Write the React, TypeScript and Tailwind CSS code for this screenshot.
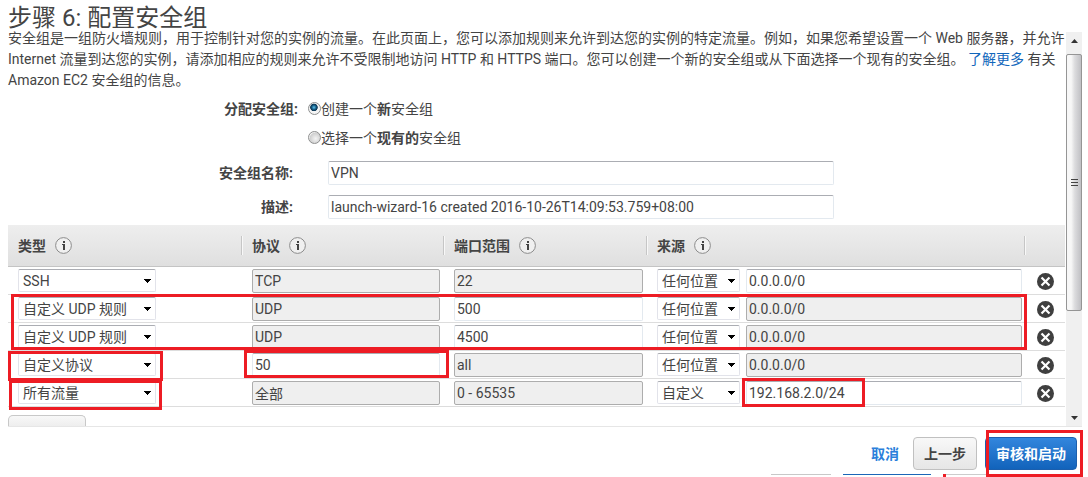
import { useState } from 'react';
import type { ReactNode } from 'react';
import clsx from 'clsx';

type Rule = {
  type: string;
  protocol: string;
  protocolEditable?: boolean;
  port: string;
  portEditable?: boolean;
  source: string;
  cidr: string;
  cidrEditable?: boolean;
};

const initialRules: Rule[] = [
  { type: 'SSH', protocol: 'TCP', port: '22', source: '任何位置', cidr: '0.0.0.0/0', cidrEditable: true },
  { type: '自定义 UDP 规则', protocol: 'UDP', port: '500', portEditable: true, source: '任何位置', cidr: '0.0.0.0/0' },
  { type: '自定义 UDP 规则', protocol: 'UDP', port: '4500', portEditable: true, source: '任何位置', cidr: '0.0.0.0/0' },
  { type: '自定义协议', protocol: '50', protocolEditable: true, port: 'all', source: '任何位置', cidr: '0.0.0.0/0' },
  { type: '所有流量', protocol: '全部', port: '0 - 65535', source: '自定义', cidr: '192.168.2.0/24', cidrEditable: true },
];

const ruleTypes = ['SSH', '自定义 UDP 规则', '自定义协议', '所有流量'];
const sources = ['任何位置', '自定义'];

function InfoIcon() {
  return (
    <svg className="size-[17px] shrink-0" viewBox="0 0 17 17" aria-hidden="true">
      <circle cx="8.5" cy="8.5" r="7.9" fill="#f0f0f0" stroke="#8c8c8c" strokeWidth="1" />
      <path d="M8 4h2v2H8zM7 7h3v6H8V8H7z" fill="#444" />
    </svg>
  );
}

function DeleteIcon() {
  return (
    <svg className="size-[17px]" viewBox="0 0 17 17" aria-hidden="true">
      <circle cx="8.5" cy="8.5" r="8.5" fill="#3f3f3f" />
      <path d="M5.3 5.3l6.4 6.4M11.7 5.3l-6.4 6.4" stroke="#fff" strokeWidth="2.2" strokeLinecap="square" />
    </svg>
  );
}

function Select({ label, value, options, className }: { label: string; value: string; options: string[]; className: string }) {
  return (
    <div className={clsx('relative shrink-0', className)}>
      <select
        aria-label={label}
        defaultValue={value}
        className="block h-[23px] w-full appearance-none rounded-[2px] border border-[#e2e3ea] border-t-[#abadb3] bg-white pl-1 leading-5"
      >
        {options.map((option) => (
          <option key={option}>{option}</option>
        ))}
      </select>
      <svg className="pointer-events-none absolute top-[10px] right-[5px] h-1 w-[7px]" viewBox="0 0 7 4" aria-hidden="true">
        <path d="M0 0h7v1H6v1H5v1H4v1H3V3H2V2H1V1H0z" fill="#000" />
      </svg>
    </div>
  );
}

function TextField({ label, value, editable }: { label: string; value: string; editable?: boolean }) {
  return (
    <input
      type="text"
      aria-label={label}
      defaultValue={value}
      disabled={!editable}
      className={clsx(
        'block h-6 w-full min-w-0 rounded-[2px] border px-0.5',
        editable ? 'border-[#e3e9ef] border-t-[#abadb3] bg-white' : 'border-[#adadad] bg-[#efefef]',
      )}
    />
  );
}

function HeaderCell({ children }: { children: ReactNode }) {
  return (
    <th scope="col" className="p-0 text-left font-bold">
      <div className="flex h-[19px] items-center gap-[9px] border-r border-[#c6c6c6] pl-[10px] shadow-[1px_0_0_#f8f8f8]">
        {children}
        <InfoIcon />
      </div>
    </th>
  );
}

function Highlight({ className }: { className: string }) {
  return <div className={clsx('pointer-events-none absolute border-3 border-[#ed1c24]', className)} />;
}

function Scrollbar() {
  return (
    <div className="mt-1 flex w-4 shrink-0 flex-col items-center bg-[#f0f0f0]" aria-hidden="true">
      <svg className="h-[22px] w-4 shrink-0" viewBox="0 0 16 22">
        <path d="M5 11l3.5-4 3.5 4z" fill="#333" />
      </svg>
      <div className="flex w-full grow-[256] basis-0 items-center justify-center rounded-[2px] border border-[#959595] bg-linear-to-r from-[#f7f7f7] from-30% via-[#dcdcde] via-55% to-[#c0c0c4]">
        <div className="flex w-[7px] flex-col gap-0.5">
          <div className="h-px bg-[#444]" />
          <div className="h-px bg-[#444]" />
          <div className="h-px bg-[#444]" />
        </div>
      </div>
      <div className="flex w-full grow-[116] basis-0 flex-col justify-end">
        <svg className="h-4 w-4" viewBox="0 0 16 16">
          <path d="M5 6h7l-3.5 4z" fill="#333" />
        </svg>
      </div>
    </div>
  );
}

export default function App() {
  const [rules, setRules] = useState(initialRules);

  return (
    <div lang="zh-CN" className="overflow-hidden bg-white font-['Roboto','Noto_Sans_CJK_SC',sans-serif] text-sm text-[#444]">
      <h1 className="h-7 pt-1.5 pl-2 text-2xl leading-6">步骤 6: 配置安全组</h1>

      <div className="mr-[6px] ml-2 flex border-b border-[#e6e6e6]">
        <div className="min-w-0 flex-1">
          <p className="leading-[21px] whitespace-nowrap">
            安全组是一组防火墙规则，用于控制针对您的实例的流量。在此页面上，您可以添加规则来允许到达您的实例的特定流量。例如，如果您希望设置一个 Web 服务器，并允许
            <br />
            Internet 流量到达您的实例，请添加相应的规则来允许不受限制地访问 HTTP 和 HTTPS 端口。您可以创建一个新的安全组或从下面选择一个现有的安全组。{' '}
            <a href="#learn-more" className="text-[#1166bb]">了解更多</a> 有关
            <br />
            Amazon EC2 安全组的信息。
          </p>

          {/* Security group */}
          <form id="security-group" className="pt-1">
            <div role="radiogroup" aria-labelledby="assign-label" className="flex gap-[10px]">
              <span id="assign-label" className="w-[290px] text-right leading-[29px] font-bold">分配安全组:</span>
              <div>
                <label className="flex h-[29px] items-center pb-0.5">
                  <input type="radio" name="group" defaultChecked className="size-[13px] appearance-none rounded-full border border-[#8e8f8f] bg-white checked:bg-[radial-gradient(circle_at_45%_40%,#5fc3ee_0,#10577f_25%,#0b3350_38%,#f4f4f4_46%)]" />
                  <span>创建一个<b>新</b>安全组</span>
                </label>
                <label className="flex h-[29px] items-center pb-0.5">
                  <input type="radio" name="group" className="size-[13px] appearance-none rounded-full border border-[#8e8f8f] bg-[radial-gradient(circle_at_60%_60%,#f4f4f4_0,#cfcfcf_60%,#f4f4f4_70%)] checked:bg-[radial-gradient(circle_at_45%_40%,#5fc3ee_0,#10577f_25%,#0b3350_38%,#f4f4f4_46%)]" />
                  <span>选择一个<b>现有的</b>安全组</span>
                </label>
              </div>
            </div>
            <div className="mt-2 flex items-center gap-[35px]">
              <label htmlFor="group-name" className="w-[285px] text-right font-bold">安全组名称:</label>
              <input id="group-name" type="text" defaultValue="VPN" className="h-6 w-[506px] rounded-[2px] border border-[#e3e9ef] border-t-[#abadb3] px-0.5" />
            </div>
            <div className="mt-[10px] flex items-center gap-[35px]">
              <label htmlFor="group-description" className="w-[285px] text-right font-bold">描述:</label>
              <input id="group-description" type="text" defaultValue="launch-wizard-16 created 2016-10-26T14:09:53.759+08:00" className="h-6 w-[506px] rounded-[2px] border border-[#e3e9ef] border-t-[#abadb3] px-0.5" />
            </div>
          </form>

          {/* Rules */}
          <div className="relative mt-1.5 mr-px">
            <table className="w-full table-fixed border-separate border-spacing-0">
              <colgroup>
                <col className="w-[234px]" />
                <col className="w-[202px]" />
                <col className="w-[203px]" />
                <col />
                <col className="w-10" />
              </colgroup>
              <thead>
                <tr className="h-[42px] bg-linear-to-b from-[#eeeeee] to-[#dfdfdf] [&>th]:border-b [&>th]:border-[#c4c4c4]">
                  <HeaderCell>类型</HeaderCell>
                  <HeaderCell>协议</HeaderCell>
                  <HeaderCell>端口范围</HeaderCell>
                  <HeaderCell>来源</HeaderCell>
                  <th aria-label="删除" />
                </tr>
              </thead>
              <tbody>
                {rules.map((rule, i) => (
                  <tr key={rule.type + rule.port} className="h-7 [&>td]:border-b [&>td]:border-[#dddddd] [&>td]:pt-0.5 [&>td]:align-top">
                    <td className="pl-[10px]">
                      <Select label="类型" value={rule.type} options={ruleTypes} className="w-[138px]" />
                    </td>
                    <td className="pr-1 pl-[10px]">
                      <TextField label="协议" value={rule.protocol} editable={rule.protocolEditable} />
                    </td>
                    <td className="pr-1 pl-[10px]">
                      <TextField label="端口范围" value={rule.port} editable={rule.portEditable} />
                    </td>
                    <td className="pr-[3px] pl-[10px]">
                      <div className="flex gap-1.5">
                        <Select label="来源" value={rule.source} options={sources} className="w-[83px]" />
                        <TextField label="来源 CIDR" value={rule.cidr} editable={rule.cidrEditable} />
                      </div>
                    </td>
                    <td>
                      <button
                        type="button"
                        aria-label="删除规则"
                        onClick={() => setRules(rules.filter((_, n) => n !== i))}
                        className="flex h-[25px] w-full items-center justify-center"
                      >
                        <DeleteIcon />
                      </button>
                    </td>
                  </tr>
                ))}
              </tbody>
            </table>

            <Highlight className="top-[69px] right-[38px] left-[3px] h-14" />
            <Highlight className="top-[126px] left-0 h-[30px] w-[155px]" />
            <Highlight className="top-[125px] left-[236px] h-7 w-[205px]" />
            <Highlight className="top-[155px] left-px h-[30px] w-[153px]" />
            <Highlight className="top-[153px] left-[734px] h-[29px] w-[123px]" />
          </div>

          <button type="button" aria-label="添加规则" className="mt-2 block h-[11px] w-[78px] rounded-t-[5px] border border-b-0 border-[#c8c8c8] bg-linear-to-b from-[#f8f8f8] to-[#eeeeee]" />
        </div>
        <Scrollbar />
      </div>

      {/* Actions */}
      <div className="flex items-center justify-end gap-2 pt-[10px] pr-[11px] font-bold">
        <a href="#cancel" className="mr-1.5 text-[#2a7fdb]">取消</a>
        <button type="button" className="h-[33px] w-16 rounded-[4px] border border-[#c0c0c0] bg-linear-to-b from-[#f8f8f8] to-[#e6e6e6]">上一步</button>
        <div className="relative">
          <button type="button" className="block h-[33px] w-[92px] rounded-[4px] border border-[#1b5fae] bg-linear-to-b from-[#3286dd] to-[#1163bb] text-white">审核和启动</button>
          <Highlight className="-top-[7px] -right-1.5 left-px h-[47px]" />
        </div>
      </div>
      <div className="mt-1 flex h-[3px] items-start justify-end pr-[5px]">
        <div className="mr-3 h-px w-[60px] bg-[#c8c8c8]" />
        <div className="mr-3 h-px w-[88px] bg-[#1b66b8]" />
        <div className="h-[3px] w-[3px] bg-[#ed1c24]" />
        <div className="h-px w-[137px] bg-[#cccccc]" />
      </div>
    </div>
  );
}
